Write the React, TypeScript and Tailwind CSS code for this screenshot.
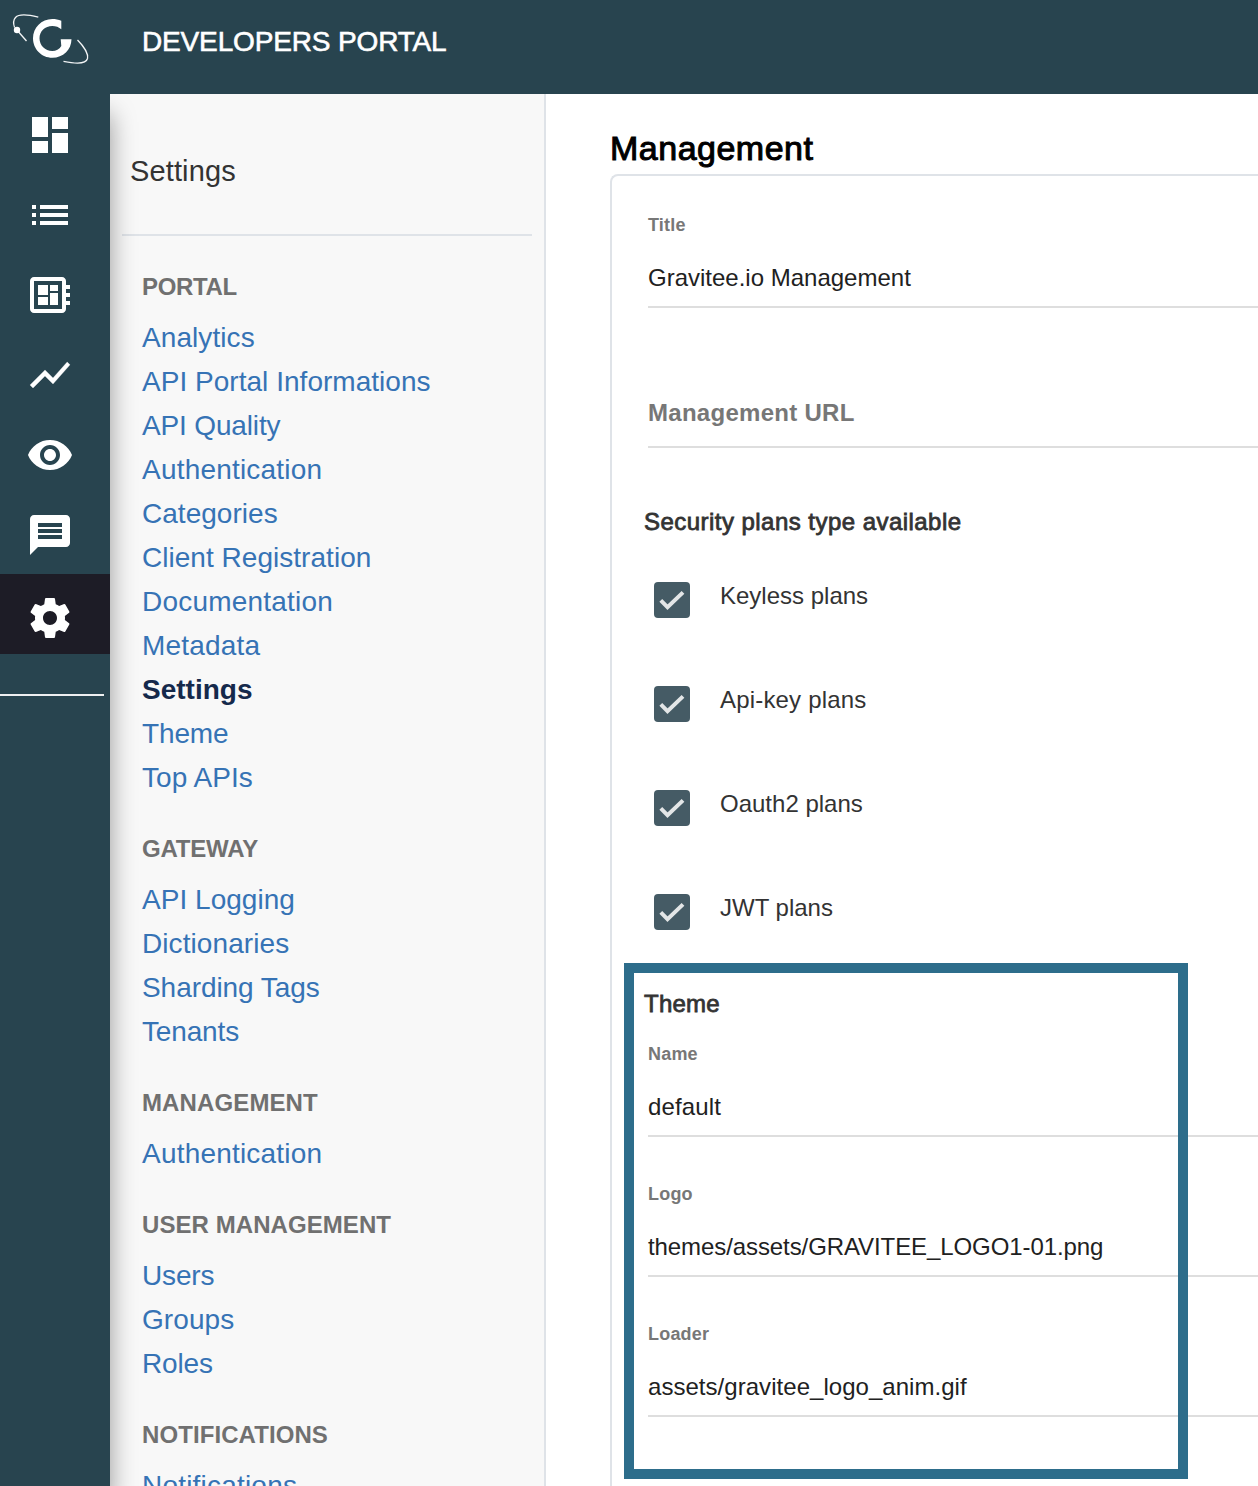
import type { ReactNode } from "react";
import { MdDashboard, MdList, MdVisibility, MdMessage, MdDeveloperBoard } from "react-icons/md";

function Logo() {
  return (
    <svg width="110" height="94" viewBox="0 0 110 94" fill="none" className="block shrink-0">
      <path d="M38.3 17.2C30 15 19 13.600 15.500 17.500C13.300 20 13.300 24 14.600 27.500" stroke="#f4f6f7" strokeWidth="1.300" />
      <path d="M17.300 30.500L26.500 41" stroke="#f4f6f7" strokeWidth="1.300" />
      <circle cx="17" cy="30" r="3.200" fill="#fff" />
      <path d="M77.500 40C83 45.500 88.500 53.500 87.500 58.500C86 64.500 74 63.500 63.500 61.300" stroke="#f4f6f7" strokeWidth="1.300" />
      <path
        d="M61.300 20.700C58.500 19.600 55.500 19 52.300 19C41.500 19 33 27.600 33 38.300C33 49.200 41.500 57.800 52.300 57.800C63.200 57.800 71.300 50 71.500 39.300H60.700L61.300 46C59.300 49.200 56 51 52.300 51C45 51 39.500 45.500 39.500 38.300C39.500 31.300 45 26 52.300 26C55.800 26 59 27.200 61.300 29.300Z"
        fill="#fff"
      />
    </svg>
  );
}

function TrendLine() {
  return (
    <svg viewBox="0 0 24 24" className="size-12" fill="currentColor">
      <path d="M3.500 18.490l6-6.010 4 4L22 6.920l-1.410-1.410-7.090 7.970-4-4L2 16.990z" stroke="currentColor" strokeWidth="0.150" />
    </svg>
  );
}

function Gear() {
  return (
    <svg viewBox="0 0 24 24" className="size-12" fill="currentColor">
      <path d="M19.43 12.98c.04-.32.07-.64.07-.98s-.03-.66-.07-.98l2.11-1.65c.19-.15.24-.42.12-.64l-2-3.46c-.12-.22-.39-.3-.61-.22l-2.49 1c-.52-.4-1.08-.73-1.69-.98l-.38-2.65C14.46 2.18 14.25 2 14 2h-4c-.25 0-.46.18-.49.42l-.38 2.65c-.61.25-1.17.59-1.69.98l-2.49-1c-.23-.09-.49 0-.61.22l-2 3.46c-.13.22-.07.49.12.64l2.11 1.65c-.04.32-.07.65-.07.98s.03.66.07.98l-2.11 1.65c-.19.15-.24.42-.12.64l2 3.46c.12.22.39.3.61.22l2.49-1c.52.4 1.08.73 1.69.98l.38 2.65c.03.24.24.42.49.42h4c.25 0 .46-.18.49-.42l.38-2.65c.61-.25 1.17-.59 1.69-.98l2.49 1c.23.09.49 0 .61-.22l2-3.46c.12-.22.07-.49-.12-.64l-2.11-1.65zM12 15.500c-1.930 0-3.500-1.570-3.500-3.500s1.570-3.500 3.500-3.500 3.500 1.570 3.500 3.500-1.570 3.500-3.500 3.500z" />
    </svg>
  );
}

const railIcons: ReactNode[] = [
  <MdDashboard className="size-12" />,
  <MdList className="size-12" />,
  <MdDeveloperBoard className="size-12" />,
  <TrendLine />,
  <MdVisibility className="size-12" />,
  <MdMessage className="size-12" />,
];

const loose = "tracking-[0.200px]";
const normal = "tracking-[0.080px]";
const snug = "tracking-[0.030px]";
const tight = "tracking-[-0.150px]";

const groups: { title: string; spacing: string; items: [string, string][] }[] = [
  {
    title: "PORTAL",
    spacing: "tracking-[-0.350px]",
    items: [
      ["Analytics", normal],
      ["API Portal Informations", snug],
      ["API Quality", tight],
      ["Authentication", loose],
      ["Categories", snug],
      ["Client Registration", snug],
      ["Documentation", loose],
      ["Metadata", loose],
      ["Settings", ""],
      ["Theme", tight],
      ["Top APIs", snug],
    ],
  },
  {
    title: "GATEWAY",
    spacing: "tracking-[-0.200px]",
    items: [["API Logging", snug], ["Dictionaries", normal], ["Sharding Tags", "tracking-[-0.060px]"], ["Tenants", tight]],
  },
  { title: "MANAGEMENT", spacing: "tracking-[0.120px]", items: [["Authentication", loose]] },
  { title: "USER MANAGEMENT", spacing: "tracking-[0.070px]", items: [["Users", tight], ["Groups", normal], ["Roles", tight]] },
  { title: "NOTIFICATIONS", spacing: "tracking-[0.080px]", items: [["Notifications", loose]] },
];

function Rail() {
  return (
    <nav className="z-10 w-[110px] shrink-0 bg-[#28444f] text-white shadow-[0_20px_24px_rgba(0,0,0,0.4)]">
      {railIcons.map((icon, i) => (
        <div key={i} className="flex h-20 items-center pt-0.5 pl-[26px]">{icon}</div>
      ))}
      <div className="flex h-20 items-center bg-[#1d1c26] pt-2 pl-[26px]">
        <Gear />
      </div>
      <div className="mt-10 h-0.5 w-[104px] bg-[#eef0f1]" />
    </nav>
  );
}

function SideMenu() {
  return (
    <aside className="w-[436px] shrink-0 border-r-2 border-[#dfe3e8] bg-[#f8f8f8]">
      <h2 className="mx-3 flex h-[142px] items-center border-b-2 border-[#dfe3e8] pt-4 pl-2 text-[29px] tracking-[0.120px] text-[#333]">
        Settings
      </h2>
      <div className="pt-0.5 pl-8">
        {groups.map((g) => (
          <section key={g.title}>
            <h3 className={`h-[78px] pt-[37px] text-[24px] leading-6 font-bold text-[#707070] ${g.spacing}`}>{g.title}</h3>
            <ul>
              {g.items.map(([item, spacing]) => (
                <li
                  key={item}
                  className={`text-[28px] leading-[44px] ${spacing} ${item === "Settings" ? "font-bold text-[#15294b]" : "text-[#3673b5]"}`}
                >
                  {item}
                </li>
              ))}
            </ul>
          </section>
        ))}
      </div>
    </aside>
  );
}

function Field({ label, value, spacing = "" }: { label: string; value: string; spacing?: string }) {
  return (
    <div className="ml-9 h-[104px] border-b-2 border-[#dedede]">
      <div className="pt-[11px] text-[18px] leading-5 font-bold tracking-[0.200px] text-[#777]">{label}</div>
      <div className={`pt-[29px] text-[24px] leading-7 text-[#212121] ${spacing}`}>{value}</div>
    </div>
  );
}

function Check({ label, spacing = "" }: { label: string; spacing?: string }) {
  return (
    <div className="flex h-[104px] items-start pl-[42px]">
      <svg width="36" height="36" viewBox="0 0 36 36" fill="none" className="block">
        <rect width="36" height="36" rx="4" fill="#455b65" />
        <path d="M6.800 18.400L13.500 25.100L29 10.400" stroke="#e3e6e7" strokeWidth="4" />
      </svg>
      <span className={`ml-[30px] text-[24px] leading-7 text-[#333] ${spacing}`}>{label}</span>
    </div>
  );
}

export default function App() {
  return (
    <div className="h-[1486px] w-[1258px] overflow-hidden bg-white font-['Liberation_Sans',Arial,sans-serif]">
      <header className="relative z-20 flex h-[94px] items-start bg-[#28444f]">
        <Logo />
        <h1 className="pt-[26px] pl-8 text-[28px] leading-8 tracking-[-0.150px] text-white [-webkit-text-stroke:0.600px_currentColor]">DEVELOPERS PORTAL</h1>
      </header>
      <div className="flex h-[1392px]">
        <Rail />
        <SideMenu />
        <main className="min-w-0 flex-1 pl-16">
          <h2 className="h-20 pt-[34px] text-[34px] leading-10 tracking-[0.500px] text-black [-webkit-text-stroke:1px_currentColor]">Management</h2>
          <div className="h-[1400px] rounded-tl-lg border-t-2 border-l-2 border-[#dfe3e8] pt-7">
            <Field label="Title" value="Gravitee.io Management" />
            <div className="ml-9 h-[140px] border-b-2 border-[#dedede] pt-[91px] text-[24px] leading-7 font-bold tracking-[0.280px] text-[#777]">Management URL</div>
            <h3 className="pt-[60px] pb-[46px] pl-8 text-[24px] leading-7 tracking-[0.460px] text-[#333] [-webkit-text-stroke:0.800px_currentColor]">Security plans type available</h3>
            <Check label="Keyless plans" />
            <Check label="Api-key plans" spacing="tracking-[0.180px]" />
            <Check label="Oauth2 plans" />
            <Check label="JWT plans" />
            <div className="relative">
              <div className="pointer-events-none absolute top-[-27px] left-3 h-[516px] w-[564px] border-10 border-[#2d6d8b]" />
              <h3 className="-mt-2 pl-8 text-[24px] leading-7 tracking-[0.250px] text-[#333] [-webkit-text-stroke:0.800px_currentColor]">Theme</h3>
              <div className="flex flex-col gap-9 pt-[15px]">
                <Field label="Name" value="default" spacing="tracking-[0.150px]" />
                <Field label="Logo" value="themes/assets/GRAVITEE_LOGO1-01.png" spacing="tracking-[-0.090px]" />
                <Field label="Loader" value="assets/gravitee_logo_anim.gif" spacing="tracking-[0.040px]" />
              </div>
            </div>
          </div>
        </main>
      </div>
    </div>
  );
}
